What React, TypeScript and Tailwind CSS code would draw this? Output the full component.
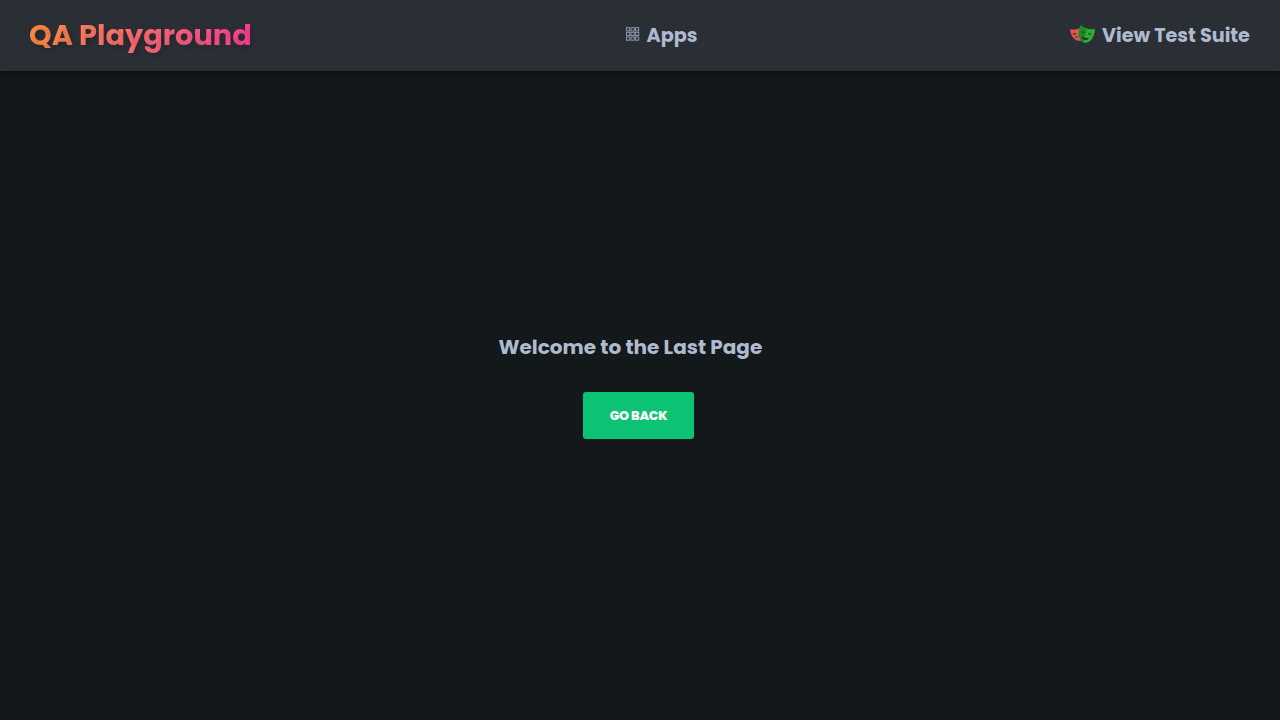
function GridIcon() {
  return (
    <svg width="14" height="14" viewBox="0 0 14 14" fill="none" stroke="currentColor" strokeWidth="1" className="mb-0.5 shrink-0 opacity-75">
      {[0.7, 5.3, 10].map((y) =>
        [0.5, 5, 9.5].map((x) => <rect key={`${x}-${y}`} x={x} y={y} width="3.2" height="3.2" />),
      )}
    </svg>
  );
}

function MasksIcon() {
  return (
    <svg width="26" height="20" viewBox="0 0 26 20" fill="none" className="shrink-0">
      <path d="M.2 4.200C3 5 6.500 4.800 9.200 3.600L12 15.400C9 16.400 5.800 15.700 3.600 13.200C1.300 10.600 0 7 .2 4.200Z" fill="#e2574c" />
      <path d="M2.900 9.300C3.900 8.400 5.200 8.500 5.900 9.300" stroke="#2d333b" strokeWidth="1.100" />
      <path d="M4.600 13.300C5.400 12 6.800 11.500 8.600 11.800" stroke="#2d333b" strokeWidth="1" />
      <path d="M10.600.2C14.500 3.600 20 4.800 25 4C24.900 9.200 22.400 15 18.500 17.100C15 19 11.400 17.300 9.800 13.800C8 9.800 8.600 4.600 10.600.2Z" fill="#2ead33" />
      <path d="M10.600.2C12.600 2 14.800 3.100 17.100 3.800L13.600 17.700C11.900 17 10.600 15.700 9.800 13.800C8 9.800 8.600 4.600 10.600.2Z" fill="#1d8d22" />
      <path d="M11.300 7.100C12.300 6.100 13.900 6.500 14.500 7.900C13.400 7.500 12.300 7.300 11.300 7.100ZM18 8.900C19.200 8 20.700 8.400 21.200 9.700C20.100 9.300 19 9.100 18 8.900Z" fill="#2d333b" stroke="#2d333b" strokeWidth=".4" />
      <path d="M11.200 11.200C13.500 12.500 16.200 13.200 19 13.200C17.800 15 15.600 15.500 13.700 14.700C12.300 14 11.400 12.800 11.200 11.200Z" fill="#2d333b" />
    </svg>
  );
}

export default function App() {
  return (
    <div className="flex h-screen flex-col overflow-hidden bg-[#13181b] font-[Poppins,Inter,sans-serif] font-bold text-[#afbacf]">
      <header className="z-10 flex h-[71px] shrink-0 items-center justify-between bg-[#2a2e35] px-[30px] pb-px shadow-[0_2px_8px_rgba(0,0,0,0.5)]">
        <a href="#" className="-ml-px w-[224px] whitespace-nowrap bg-linear-to-r from-[#ff8a40] to-[#ff3c94] bg-clip-text text-[28.8px] leading-[43px] text-transparent [text-shadow:3px_3px_4px_rgba(0,0,0,0.12)]">
          QA Playground
        </a>
        <a href="#" className="flex w-[72px] items-center gap-[7px] whitespace-nowrap text-[19.2px] leading-[29px]">
          <GridIcon />
          <span>Apps</span>
        </a>
        <a href="#" className="flex w-[180px] items-center gap-1.5 whitespace-nowrap text-[19.2px] leading-[29px]">
          <MasksIcon />
          <span>View Test Suite</span>
        </a>
      </header>
      <main className="flex flex-1 flex-col items-center pt-[261px]">
        <h1 className="mr-5 w-[263px] whitespace-nowrap text-[20px] leading-[30px]">Welcome to the Last Page</h1>
        <button className="mt-[30px] mr-[3px] h-[47px] w-[111px] whitespace-nowrap rounded-[3px] bg-[#0bc372] text-[12.8px] font-extrabold tracking-[-0.25px] text-white">
          GO BACK
        </button>
      </main>
    </div>
  );
}
